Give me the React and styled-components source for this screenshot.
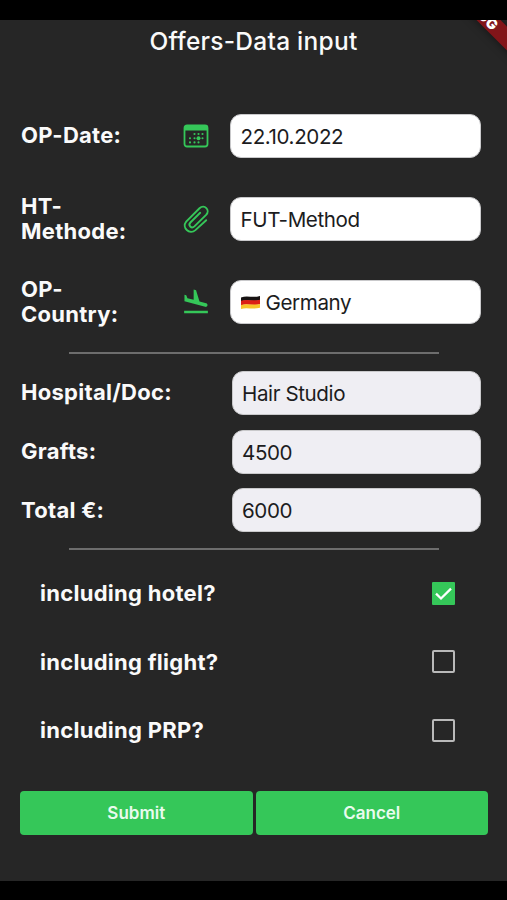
import React, { useState } from 'react';
import styled, { createGlobalStyle } from 'styled-components';
import { MdFlightLand } from 'react-icons/md';

const GlobalStyle = createGlobalStyle`
    * {
        box-sizing: border-box;
    }
    body {
        margin: 0;
        background: #000;
        font-family: Inter, "Liberation Sans", sans-serif;
    }
`

const Page = styled.div`
    width: 507px;
    height: 900px;
    padding: 20px 0 19px;
    background: #000;
`
const Screen = styled.main`
    position: relative;
    height: 861px;
    padding: 0 20px;
    overflow: hidden;
    background: #262626;
`
const DebugBanner = styled.div`
    position: absolute;
    top: -19px;
    left: 407.5px;
    width: 140px;
    height: 17px;
    line-height: 17px;
    text-align: center;
    font-size: 14.4px;
    font-weight: 900;
    color: #fff;
    background: #821519;
    box-shadow: 0 0 8px rgba(0, 0, 0, 0.5);
    transform: rotate(45deg);
`
const Title = styled.h1`
    margin: 0;
    padding-top: 6px;
    height: 74px;
    text-align: center;
    font-size: 24.5px;
    line-height: 30px;
    font-weight: 450;
    letter-spacing: 0.25px;
    color: #fafafa;
`
const Row = styled.div`
    display: flex;
    align-items: center;
    height: ${({ $height }) => $height}px;
    padding: 0 6.5px 0 1px;
`
const Label = styled.span`
    width: ${({ $wide }) => ($wide ? '210.5px' : '115px')};
    padding-top: 1px;
    font-size: 22px;
    line-height: 25.5px;
    font-weight: 700;
    letter-spacing: 0.28px;
    color: #fafafa;
`
const IconBox = styled.span`
    display: flex;
    align-items: center;
    justify-content: center;
    width: 30px;
    height: 30px;
    margin: 0 19px 0 45px;
    color: #35c759;
`
const Field = styled.div`
    display: flex;
    flex: 1;
    align-items: center;
    gap: 6px;
    height: 44px;
    padding: 1px 9.5px 0;
    border: 1px solid #c9c9cb;
    border-radius: 11px;
    font-size: 20.6px;
    letter-spacing: -0.4px;
    color: #1c1c1e;
    background: ${({ $muted }) => ($muted ? '#efeef3' : '#fff')};
`
const Divider = styled.hr`
    width: 370px;
    height: 2px;
    margin: ${({ $margin }) => $margin};
    border: 0;
    background: #6d6d6d;
`
const CheckRow = styled.label`
    display: flex;
    align-items: center;
    justify-content: space-between;
    height: 68.5px;
    padding: 0 32px 0 20px;
`
const CheckBox = styled.button`
    display: flex;
    align-items: center;
    justify-content: center;
    width: 23px;
    height: 23px;
    padding: 0;
    border: 2px solid ${({ $checked }) => ($checked ? '#35c759' : '#b9b9b9')};
    border-radius: ${({ $checked }) => ($checked ? '1px' : '2px')};
    background: ${({ $checked }) => ($checked ? '#35c759' : 'transparent')};
`
const Actions = styled.div`
    display: flex;
    gap: 3px;
    margin: 26px -1px 0 0;
`
const ActionButton = styled.button`
    flex: 1;
    height: 44px;
    padding: 0;
    border: 0;
    border-radius: 4px;
    font-family: inherit;
    font-size: 17px;
    font-weight: 600;
    color: #e9fbee;
    background: #35c759;
`

const dots = [
    [11.5, 10], [15.5, 10], [19.5, 10],
    [7, 14.2], [11.5, 14.2], [19.5, 14.2],
    [7, 18.4], [11.5, 18.4], [15.5, 18.4],
];

const CalendarIcon = () => (
    <svg width="26" height="24" viewBox="0 0 26 24" fill="none">
        <rect x="1.5" y="1.5" width="23" height="21" rx="2.5" stroke="currentColor" strokeWidth="1.8" />
        <path d="M1 6.5V4Q1 1 4 1H22Q25 1 25 4V6.5Z" fill="currentColor" />
        {dots.map(([x, y]) => (
            <circle key={`${x}-${y}`} cx={x} cy={y} r="1.05" fill="currentColor" />
        ))}
        <circle cx="15.5" cy="14.2" r="2" fill="currentColor" />
    </svg>
);

const PaperclipIcon = () => (
    <svg width="28" height="28" viewBox="0 0 28 28" fill="none" stroke="currentColor" strokeWidth="1.9" strokeLinecap="round">
        <path d="M24.2 15.2L13.4 25.1C7.5 30.2-.6 22.6 4.2 16.7L17.5 3.3C22.4-1.2 28.6 5 24.1 9.9L12.4 21.4C9.4 24 5.7 20.4 8.4 17.5L18.2 7.8" />
    </svg>
);

const GermanFlag = () => (
    <svg width="19" height="15" viewBox="0 0 19 15">
        <path d="M0 2.4C6 0 12 3.1 19 .9V5.2C12 7.1 6 4.2 0 6.3Z" fill="#171313" />
        <path d="M0 5.8C6 3.5 12 6.6 19 4.7V9.2C12 11.2 6 8 0 10.3Z" fill="#dc1f16" />
        <path d="M0 10C6 7.8 12 10.9 19 8.9V12.8C12 14.9 6 11.9 0 14Z" fill="#f7c52b" />
    </svg>
);

const App = () => {
    const [included, setIncluded] = useState({ hotel: true, flight: false, PRP: false });

    const toggle = (name) => {
        setIncluded({ ...included, [name]: !included[name] });
    };

    return (
        <Page>
            <GlobalStyle />
            <Screen>
                <DebugBanner>DEBUG</DebugBanner>
                <Title>Offers-Data input</Title>

                <Row $height={83}>
                    <Label>OP-Date:</Label>
                    <IconBox><CalendarIcon /></IconBox>
                    <Field>22.10.2022</Field>
                </Row>
                <Row $height={83}>
                    <Label>HT-Methode:</Label>
                    <IconBox><PaperclipIcon /></IconBox>
                    <Field>FUT-Method</Field>
                </Row>
                <Row $height={83}>
                    <Label>OP-Country:</Label>
                    <IconBox><MdFlightLand size={30} /></IconBox>
                    <Field><GermanFlag />Germany</Field>
                </Row>

                <Divider $margin="9px 0 9px 49px" />

                <Row $height={59}>
                    <Label $wide>Hospital/Doc:</Label>
                    <Field $muted>Hair Studio</Field>
                </Row>
                <Row $height={59}>
                    <Label $wide>Grafts:</Label>
                    <Field $muted>4500</Field>
                </Row>
                <Row $height={58}>
                    <Label $wide>Total €:</Label>
                    <Field $muted>6000</Field>
                </Row>

                <Divider $margin="9px 0 9px 49px" />

                {Object.keys(included).map((name) => (
                    <CheckRow key={name}>
                        <Label $wide>including {name}?</Label>
                        <CheckBox
                            type="button"
                            role="checkbox"
                            aria-checked={included[name]}
                            $checked={included[name]}
                            onClick={() => toggle(name)}
                        >
                            {included[name] && (
                                <svg width="19" height="19" viewBox="0 0 19 19" fill="none" stroke="#fff" strokeWidth="2.3">
                                    <path d="M2 9.7L7 14.5L17 4.6" />
                                </svg>
                            )}
                        </CheckBox>
                    </CheckRow>
                ))}

                <Actions>
                    <ActionButton type="submit">Submit</ActionButton>
                    <ActionButton type="button">Cancel</ActionButton>
                </Actions>
            </Screen>
        </Page>
    );
}

export default App
